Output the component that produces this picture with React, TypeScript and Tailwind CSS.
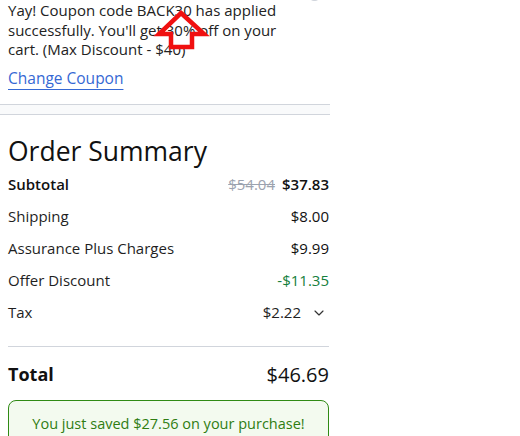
import { ChevronDown } from "lucide-react";

const font = { fontFamily: '"Open Sans", "Noto Sans", sans-serif' };

function Row({
  label,
  children,
  bold,
}: {
  label: string;
  children: React.ReactNode;
  bold?: boolean;
}) {
  return (
    <div className="flex h-8 items-center justify-between">
      <span className={bold ? "font-semibold text-[#111]" : "text-[#1f1f1f]"}>{label}</span>
      <div className="flex items-center gap-[7px]">{children}</div>
    </div>
  );
}

export default function App() {
  return (
    <div className="relative min-h-[436px] w-[520px] bg-white" style={font}>
      {/* cut-off button at top */}
      <div className="absolute -top-[9px] left-[309px] h-[10px] w-[11px] rounded-full bg-gray-300" />

      <div className="w-[330px]">
        {/* Coupon message */}
        <div className="border-b border-gray-300 pb-[14px] pl-2 pr-6 pt-[1px]">
          <div className="relative">
            <p className="text-[15px] leading-[19.5px] text-[#222]">
              Yay! Coupon code BACK30 has applied successfully. You'll get 30% off on your
              cart. (Max Discount - $40)
            </p>
            {/* red annotation arrow */}
            <svg
              className="absolute left-[145px] top-[8px]"
              width="60"
              height="44"
              viewBox="0 0 60 44"
              fill="none"
            >
              <path
                d="M28 4 L51 25 L39 25 L39 38 L18 38 L18 25 L6 25 Z"
                stroke="#f01010"
                strokeWidth="4.5"
                strokeLinejoin="miter"
                fill="none"
              />
            </svg>
          </div>
          <a className="mt-[8px] inline-block text-[15.5px] leading-5 text-[#3568d4] underline decoration-[#3568d4] underline-offset-[5px]">
            Change Coupon
          </a>
        </div>
        <div className="h-[10px] border-b border-gray-300 bg-gray-50" />

        {/* Order Summary */}
        <div className="pl-2 pr-[1px] pt-[20px]">
          <h2 className="text-[26.5px] leading-8 text-[#111]">Order Summary</h2>
          <div className="mt-[2px] text-[15px]">
            <Row label="Subtotal" bold>
              <span className="text-[#9ca3af] line-through">$54.04</span>
              <span className="font-semibold text-[#111]">$37.83</span>
            </Row>
            <Row label="Shipping">
              <span className="font-medium text-[#111]">$8.00</span>
            </Row>
            <Row label="Assurance Plus Charges">
              <span className="font-medium text-[#111]">$9.99</span>
            </Row>
            <Row label="Offer Discount">
              <span className="font-medium text-[#15803d]">-$11.35</span>
            </Row>
            <Row label="Tax">
              <span className="text-[#222]">$2.22</span>
              <ChevronDown className="ml-[3px] mr-[2px] h-4 w-4 text-[#333]" strokeWidth={1.75} />
            </Row>
          </div>

          <div className="mt-[17px] border-t border-gray-300" />

          <div className="flex h-[53px] items-center justify-between pt-[3px]">
            <span className="text-[18px] font-bold text-[#111]">Total</span>
            <span className="text-[20px] font-medium text-[#111]">$46.69</span>
          </div>

          <div className="rounded-lg border border-[#2f8a14] bg-[#f3faef] py-[12px] text-center text-[14.5px] text-[#2f7d12]">
            You just saved $27.56 on your purchase!
          </div>
        </div>
      </div>
    </div>
  );
}
